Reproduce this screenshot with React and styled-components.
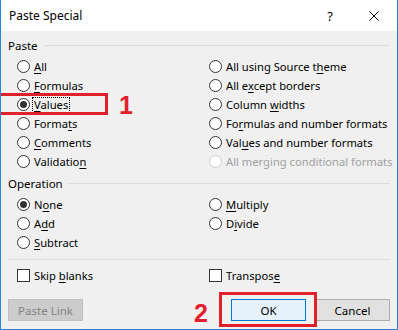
import React from "react";
import styled, { createGlobalStyle } from "styled-components";

const Global = createGlobalStyle`
  html, body { margin: 0; padding: 0; background: #ffffff; }
  body { font-family: "Noto Sans", "Open Sans", sans-serif; }
`;

const Window = styled.div`
  position: relative;
  width: 398px;
  height: 330px;
  box-sizing: border-box;
  border: 1px solid #2d84d6;
  border-top: none;
  background: #f0f0f0;
  display: flex;
  flex-direction: column;
  overflow: hidden;
  font-family: "Noto Sans", "Open Sans", sans-serif;
  font-size: 11.2px;
  color: #000;
`;

const TitleBar = styled.div`
  height: 31px;
  background: #ffffff;
  display: flex;
  align-items: center;
  padding-left: 8px;
  flex-shrink: 0;
`;

const Title = styled.div`
  flex: 1;
  font-size: 12px;
  color: #000;
`;

const TitleButton = styled.div`
  width: ${(p) => p.$w}px;
  height: 31px;
  display: flex;
  align-items: center;
  justify-content: center;
  font-size: 13px;
  color: #000;
`;

const Body = styled.div`
  flex: 1;
  display: flex;
  flex-direction: column;
  padding: 6px 7px 8px 7px;
`;

const Legend = styled.div`
  display: flex;
  align-items: center;
  height: 16px;
  gap: 6px;
  font-size: 11.5px;
  &::after {
    content: "";
    flex: 1;
    height: 1px;
    background: #dcdcdc;
  }
`;

const Grid = styled.div`
  display: grid;
  grid-template-columns: 192px 1fr;
  grid-auto-rows: 19px;
  padding-left: 9px;
  margin-top: ${(p) => p.$mt}px;
  margin-bottom: ${(p) => p.$mb}px;
`;

const Option = styled.label`
  display: flex;
  align-items: center;
  gap: 4px;
  color: ${(p) => (p.$disabled ? "#a0a0a0" : "#000")};
  white-space: nowrap;
`;

const Radio = styled.span`
  width: 13px;
  height: 13px;
  box-sizing: border-box;
  border-radius: 50%;
  border: 1px solid ${(p) => (p.$disabled ? "#cccccc" : "#333333")};
  background: #fff;
  display: flex;
  align-items: center;
  justify-content: center;
  flex-shrink: 0;
  &::after {
    content: "";
    display: ${(p) => (p.$checked ? "block" : "none")};
    width: 7px;
    height: 7px;
    border-radius: 50%;
    background: #333333;
  }
`;

const Check = styled.span`
  width: 13px;
  height: 13px;
  box-sizing: border-box;
  border: 1px solid #333333;
  background: #fff;
  flex-shrink: 0;
`;

const Text = styled.span`
  outline: ${(p) => (p.$focus ? "1px dotted #000" : "none")};
  outline-offset: 0px;
  line-height: 14px;
  padding: 0 1px;
  margin-left: -1px;
`;

const U = styled.span`
  text-decoration: underline;
  text-underline-offset: 2px;
`;

const Divider = styled.div`
  height: 1px;
  background: #dcdcdc;
  margin: 0 0 6px 0;
`;

const ButtonRow = styled.div`
  display: flex;
  align-items: center;
  margin-top: 14px;
`;

const Button = styled.div`
  width: 75px;
  height: 22px;
  box-sizing: border-box;
  display: flex;
  align-items: center;
  justify-content: center;
  font-size: 11.5px;
  border: 1px solid
    ${(p) => (p.$primary ? "#0078d7" : p.$disabled ? "#bfbfbf" : "#adadad")};
  background: ${(p) =>
    p.$primary ? "#e5f1fb" : p.$disabled ? "#cccccc" : "#e1e1e1"};
  color: ${(p) => (p.$disabled ? "#838383" : "#000")};
  margin-left: ${(p) => p.$ml || 0}px;
`;

const Spacer = styled.div`
  flex: 1;
`;

const RedBox = styled.div`
  position: absolute;
  border: 3px solid #e2202c;
  box-sizing: border-box;
`;

const RedNum = styled.div`
  position: absolute;
  color: #e2202c;
  font-family: "Liberation Sans", Arial, sans-serif;
  font-weight: bold;
  font-size: 25px;
  line-height: 1;
`;

function Opt({ children, checked, disabled, focus }) {
  return (
    <Option $disabled={disabled}>
      <Radio $checked={checked} $disabled={disabled} />
      <Text $focus={focus}>{children}</Text>
    </Option>
  );
}

function CheckOpt({ children }) {
  return (
    <Option>
      <Check />
      <Text>{children}</Text>
    </Option>
  );
}

export default function App() {
  return (
    <>
      <Global />
      <Window>
        <TitleBar>
          <Title>Paste Special</Title>
          <TitleButton $w={42}>?</TitleButton>
          <TitleButton $w={46}>
            <svg width="10" height="10" viewBox="0 0 10 10">
              <path d="M0.5 0.5 L9.5 9.5 M9.5 0.5 L0.5 9.5" stroke="#000" strokeWidth="1" />
            </svg>
          </TitleButton>
        </TitleBar>
        <Body>
          <Legend>Paste</Legend>
          <Grid $mt={4} $mb={4}>
            <Opt><U>A</U>ll</Opt>
            <Opt>All using Source t<U>h</U>eme</Opt>
            <Opt><U>F</U>ormulas</Opt>
            <Opt>All e<U>x</U>cept borders</Opt>
            <Opt checked focus><U>V</U>alues</Opt>
            <Opt>Column <U>w</U>idths</Opt>
            <Opt>Forma<U>t</U>s</Opt>
            <Opt>Fo<U>r</U>mulas and number formats</Opt>
            <Opt><U>C</U>omments</Opt>
            <Opt>Val<U>u</U>es and number formats</Opt>
            <Opt>Validatio<U>n</U></Opt>
            <Opt disabled>All merging conditional formats</Opt>
          </Grid>
          <Legend>Operation</Legend>
          <Grid $mt={4} $mb={7}>
            <Opt checked>N<U>o</U>ne</Opt>
            <Opt><U>M</U>ultiply</Opt>
            <Opt>A<U>d</U>d</Opt>
            <Opt>D<U>i</U>vide</Opt>
            <Opt><U>S</U>ubtract</Opt>
            <span />
          </Grid>
          <Divider />
          <Grid $mt={0} $mb={0}>
            <CheckOpt>Skip <U>b</U>lanks</CheckOpt>
            <CheckOpt>Transpos<U>e</U></CheckOpt>
          </Grid>
          <ButtonRow>
            <Button $disabled>Paste Link</Button>
            <Spacer />
            <Button $primary>OK</Button>
            <Button $ml={9}>Cancel</Button>
          </ButtonRow>
        </Body>
        <RedBox style={{ left: -4, top: 93, width: 111, height: 22 }} />
        <RedNum style={{ left: 118, top: 93 }}>1</RedNum>
        <RedBox style={{ left: 218, top: 292, width: 98, height: 35 }} />
        <RedNum style={{ left: 193, top: 301 }}>2</RedNum>
      </Window>
    </>
  );
}
